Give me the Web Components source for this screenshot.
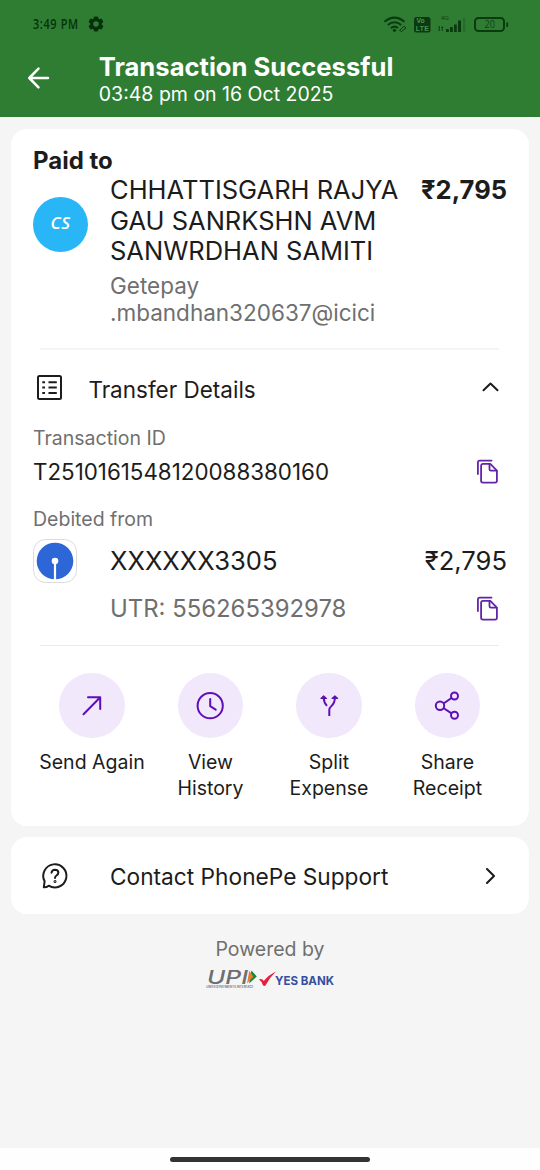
<!DOCTYPE html>
<html lang="en">
<head>
<meta charset="utf-8">
<title>Transaction Successful</title>
<style>
  html, body { margin: 0; padding: 0; }
  body { background: #f5f5f5; color: #1c1c1c; font-family: Inter, "Noto Sans", sans-serif; }
</style>
</head>
<body>
<phone-screen>
  <status-bar slot="header"></status-bar>
  <app-header slot="header">Transaction Successful<span slot="sub">03:48 pm on 16 Oct 2025</span></app-header>

  <ui-card>
    <payee-block initials="CS" amount="₹2,795">
      <span>CHHATTISGARH RAJYA<br>GAU SANRKSHN AVM<br>SANWRDHAN SAMITI</span>
      <span slot="handle">Getepay<br>.mbandhan320637@icici</span>
    </payee-block>
    <ui-divider style="--h:2px"></ui-divider>
    <transfer-details></transfer-details>
    <ui-divider style="--c:#ebebeb"></ui-divider>
    <action-bar>
      <action-item icon="send">Send Again</action-item>
      <action-item icon="clock">View<br>History</action-item>
      <action-item icon="split">Split<br>Expense</action-item>
      <action-item icon="share">Share<br>Receipt</action-item>
    </action-bar>
  </ui-card>

  <ui-card style="height:77px">
    <support-row>Contact PhonePe Support</support-row>
  </ui-card>

  <powered-by>Powered by</powered-by>
  <nav-handle slot="footer"></nav-handle>
</phone-screen>

<script>
const ICONS = {
  send: `<svg width="36" height="36" viewBox="0 0 36 36" fill="none" stroke="#5f10b4" stroke-width="2" stroke-linecap="round" stroke-linejoin="round"><path d="M9.500 26.300L26 9.500M14 9.200H26.200V21"/></svg>`,
  clock: `<svg width="36" height="36" viewBox="0 0 36 36" fill="none" stroke="#5f10b4" stroke-width="2" stroke-linecap="round" stroke-linejoin="round"><circle cx="18.200" cy="17.700" r="12.600"/><path d="M18.200 11V18.200L23.700 21.700"/></svg>`,
  split: `<svg width="36" height="36" viewBox="0 0 36 36" fill="none" stroke="#5f10b4" stroke-width="2" stroke-linecap="butt" stroke-linejoin="round"><path d="M18.300 28V21.800C18.300 17.500 23.900 18.500 23.900 9.500M12.600 9.500C12.800 13.500 13.600 15.500 16 17.900"/><path d="M10 10.500L12.600 7.900L15.400 10.500ZM21.100 10.500L23.900 7.900L26.600 10.500Z" fill="#5f10b4" stroke-width="1.200"/></svg>`,
  share: `<svg width="36" height="36" viewBox="0 0 36 36" fill="none" stroke="#5f10b4" stroke-width="2"><circle cx="11" cy="17.700" r="4.200"/><circle cx="25.500" cy="8" r="3.500"/><circle cx="25.500" cy="27.200" r="3.500"/><path d="M14.500 15.500L22.500 10M14.400 20L22.500 25.300"/></svg>`,
  copy: `<svg width="24" height="26" viewBox="0 0 24 26" fill="none" stroke="#6224a8" stroke-width="1.800" stroke-linecap="round" stroke-linejoin="round"><path d="M1.900 15V3.500Q1.900 1.600 3.800 1.600H15.500"/><path d="M7 4.900H14.300L20.900 11.600V21.800Q20.900 23.600 19.100 23.600H7Q5.100 23.600 5.100 21.800V6.800Q5.100 4.900 7 4.900Z"/><path d="M13.500 5.200V10.200Q13.500 11.700 15 11.700H20.500"/></svg>`,
};

function element(name, css, html) {
  customElements.define(name, class extends HTMLElement {
    connectedCallback() {
      if (this.shadowRoot) return;
      const root = this.attachShadow({ mode: 'open' });
      root.innerHTML = `<style>:host,*{box-sizing:border-box}svg{display:block;flex:none;overflow:visible}${css}</style>` +
        (typeof html === 'function' ? html(this) : html);
    }
  });
}

element('phone-screen', `
  :host { display: flex; flex-direction: column; width: 540px; height: 1170px; overflow: hidden; background: #f5f5f5; }
  header { height: 117px; background: #2e7d32; flex: none; }
  main { flex: 1; display: flex; flex-direction: column; gap: 11px; padding: 12px 11px 0; }`,
  `<header><slot name="header"></slot></header><main><slot></slot></main><slot name="footer"></slot>`);

element('status-bar', `
  :host { display: flex; justify-content: space-between; align-items: center; height: 48px; padding: 0 31px 0 33px; color: #07310b; }
  div { display: flex; align-items: center; }
  .time { display: inline-block; width: 54.500px; font: 600 14px/20px "Open Sans", sans-serif; white-space: nowrap; }
  .time span { display: inline-block; transform: scaleX(.78); transform-origin: 0 50%; letter-spacing: .8px; }`,
  `<div><span class="time"><span>3:49 PM</span></span>
    <svg width="16" height="16" viewBox="0 0 16 16"><g fill="#07310b"><rect x="5.800" y=".4" width="4.400" height="15.200" rx="1"/><rect x="5.800" y=".4" width="4.400" height="15.200" rx="1" transform="rotate(60 8 8)"/><rect x="5.800" y=".4" width="4.400" height="15.200" rx="1" transform="rotate(120 8 8)"/><circle cx="8" cy="8" r="6"/></g><circle cx="8" cy="8" r="2.800" fill="#2e7d32"/></svg></div>
   <svg width="126" height="22" viewBox="383 13 126 22" fill="none" stroke="#0b3a10">
     <g stroke-width="2"><path d="M384.500 21.800Q394.500 13.500 404.500 21.800"/><path d="M387.800 25Q394.500 19.600 401.200 25"/><path d="M390.800 28.200Q394.500 25.200 398 28"/></g>
     <circle cx="394.500" cy="30.300" r="1.600" fill="#0b3a10" stroke="none"/>
     <path d="M399.500 30.500L404 26.200L406 28L401.500 31.500Z" stroke-width="1"/>
     <rect x="414" y="17" width="16.500" height="15.500" rx="2.500" fill="#0b3a10" stroke="none"/>
     <g stroke="none" font-family="Liberation Sans, sans-serif" font-weight="700" fill="#4a9550"><text x="416.500" y="23.400" font-size="6.800">Vo</text><text x="415.800" y="31.400" font-size="6.800" textLength="13">LTE</text>
     <text x="441" y="20" font-size="6" fill="#0f3f14" font-weight="400">4G</text></g>
     <g fill="#0b3a10" stroke="none"><rect x="438.700" y="26" width="1" height="5"/><path d="M441 28L442.200 26L443.400 28H442.700V31H441.800V28Z"/><rect x="446" y="29" width="2.800" height="3"/><rect x="450" y="27" width="2.800" height="5"/><rect x="454" y="24.500" width="2.800" height="7.500"/><rect x="458" y="20.500" width="3" height="11.500"/></g>
     <rect x="463" y="18" width="2.300" height="14" fill="#266d2b" stroke="none"/>
     <rect x="475" y="18" width="29" height="13" rx="3.500" stroke-width="2"/><path d="M507.200 22.500V27" stroke-width="1.800"/>
     <text x="484.500" y="28.300" font-size="10" font-family="Open Sans, sans-serif" fill="#0f4415" stroke="none" textLength="10.500" lengthAdjust="spacingAndGlyphs">20</text>
   </svg>`);

element('app-header', `
  :host { display: flex; padding: 4.800px 0 0 27px; color: #fff; }
  svg { margin: 13.500px 47.800px 0 0; }
  h1 { margin: 0; font: 700 25.600px/28px Inter; }
  p { margin: 0; font: 400 19.500px/26px Inter; margin-top: .4px; }`,
  `<svg width="24" height="24" viewBox="0 0 24 24" fill="none" stroke="#fff" stroke-width="2.500" stroke-linecap="round" stroke-linejoin="round"><path d="M21 12H2.500M11.500 2.700L2.300 12L11.500 21.300"/></svg>
   <div><h1><slot></slot></h1><p><slot name="sub"></slot></p></div>`);

element('ui-card', `:host { display: block; background: #fff; border-radius: 16px; padding: 0 22px; }
  :host(:first-of-type) { height: 697px; }`, `<slot></slot>`);

element('payee-block', `
  :host { display: block; padding-top: 20px; }
  h2 { margin: 0 0 2.400px; font: 700 24px/24px Inter; }
  .row { display: grid; grid-template-columns: 55px 1fr auto; column-gap: 22px; height: 172.600px; }
  .avatar { margin-top: 21.600px; width: 55px; height: 55px; border-radius: 50%; background: #29b6f6; color: #fff; display: flex; align-items: center; justify-content: center; font: italic 600 17px/1 "Open Sans", sans-serif; padding-bottom: 3px; letter-spacing: .5px; }
  .name { font-size: 25.500px; line-height: 30.400px; white-space: nowrap; }
  .handle { margin-top: 5.300px; font-size: 22.500px; line-height: 27.300px; color: #6f6f6f; white-space: nowrap; }
  .amt { font: 700 25.500px/30.400px Inter; }`,
  h => `<h2>Paid to</h2><div class="row"><div class="avatar">${h.getAttribute('initials')}</div>
   <div><div class="name"><slot></slot></div><div class="handle"><slot name="handle"></slot></div></div>
   <div class="amt">${h.getAttribute('amount')}</div></div>`);

element('ui-divider', `:host { display: block; height: var(--h, 1px); margin: 0 8px 0 7px; background: var(--c, #f5f5f5); }`, ``);

element('copy-button', `:host { display: block; margin: 1px 7px 0 0; }`, ICONS.copy);

element('transfer-details', `
  :host { display: block; height: 295px; padding-top: 25px; }
  div { display: flex; justify-content: space-between; align-items: center; }
  .head { height: 30px; font-size: 22.500px; justify-content: flex-start; padding-left: 3px; }
  .head svg { position: relative; top: -2.500px; }
  .head b { font-weight: 400; margin: 0 auto 0 25.400px; }
  .label { height: 24px; font-size: 19.500px; color: #6f6f6f; }
  .id { height: 30px; margin-top: 6.500px; font-size: 22.350px; }
  .acct { height: 44px; margin-top: 8px; font-size: 25.600px; justify-content: flex-start; gap: 33px; }
  .acct i { font-style: normal; margin-left: auto; }
  .utr { height: 30px; margin-top: 10.500px; padding-left: 77px; font-size: 23.900px; color: #6f6f6f; }`,
  `<div class="head">
     <svg width="27" height="27" viewBox="0 0 27 27" fill="none" stroke="#1c1c1c" stroke-width="2"><rect x="2" y="2" width="23" height="23" rx="1.500"/><path d="M6.300 8.200H9M12.500 8.200H20.800M6.300 13.500H9M12.500 13.500H20.800M6.300 19H9M12.500 19H20.800"/></svg>
     <b>Transfer Details</b>
     <svg width="18" height="12" viewBox="0 0 18 12" style="margin-right:8px" fill="none" stroke="#1c1c1c" stroke-width="2" stroke-linecap="round" stroke-linejoin="round"><path d="M2.500 9.300L9.500 2.500L16.500 9.300"/></svg>
   </div>
   <div class="label" style="margin-top:21px">Transaction ID</div>
   <div class="id"><span>T2510161548120088380160</span><copy-button></copy-button></div>
   <div class="label" style="margin-top:20.500px">Debited from</div>
   <div class="acct">
     <svg width="44" height="44" viewBox="0 0 44 44"><rect x=".5" y=".5" width="43" height="43" rx="12" fill="#fff" stroke="#dcdcdc"/><circle cx="22" cy="22" r="18.300" fill="#2d66d6"/><circle cx="22" cy="22" r="3.300" fill="#fff"/><rect x="20.900" y="22" width="2.200" height="19" fill="#fff"/></svg>
     <span>XXXXXX3305</span><i>₹2,795</i></div>
   <div class="utr"><span>UTR: 556265392978</span><copy-button></copy-button></div>`);

element('action-bar', `:host { display: grid; grid-template-columns: repeat(4, 118.500px); margin-left: -.3px; padding-top: 26.800px; }`, `<slot></slot>`);

element('action-item', `
  :host { display: flex; flex-direction: column; align-items: center; text-align: center; font-size: 19.500px; line-height: 26px; white-space: nowrap; }
  .disc { width: 65.600px; height: 65.600px; border-radius: 50%; background: #f1e8fc; display: flex; align-items: center; justify-content: center; margin-bottom: 10.400px; }`,
  h => `<div class="disc">${ICONS[h.getAttribute('icon')]}</div><span><slot></slot></span>`);

element('support-row', `
  :host { display: flex; align-items: center; height: 78px; padding: 0 9px 0 7px; font-size: 22.700px; }
  span { margin: 0 auto 0 40px; }`,
  `<svg width="30" height="30" viewBox="0 0 30 30" fill="none" stroke="#1c1c1c" stroke-width="2" stroke-linejoin="round" stroke-linecap="round"><path d="M3.800 26.300L4.600 20.300A11.600 11.600 0 1 1 8.700 24.700Q6.500 26.500 3.800 26.300Z"/><path d="M11.500 11.700Q12 8.700 15 8.700Q18.300 8.900 18.400 11.600Q18.400 13.300 16.500 14.500Q15 15.500 15 17"/><circle cx="15" cy="20.500" r=".5"/></svg>
   <span><slot></slot></span>
   <svg width="14" height="20" viewBox="0 0 14 20" fill="none" stroke="#1c1c1c" stroke-width="2.100" stroke-linecap="round" stroke-linejoin="round"><path d="M3 3L10 10L3 17"/></svg>`);

element('powered-by', `
  :host { display: flex; flex-direction: column; align-items: center; padding-top: 11px; font-size: 19.500px; line-height: 26px; color: #6f6f6f; }
  svg { margin-top: 6px; }`,
  `<slot></slot>
   <svg width="130" height="22" viewBox="205 968 130 22">
     <text x="207" y="983.500" font-family="Inter, sans-serif" font-style="italic" font-weight="500" font-size="18.500" fill="#6d6e71" textLength="41" lengthAdjust="spacingAndGlyphs">UPI</text>
     <path d="M251.500 970.500L256.800 976.500L249 983.500Z" fill="#17863f"/><path d="M249.300 970.500L253.300 976.700L247 983.500Z" fill="#ee7d2b"/>
     <text x="206.300" y="988.300" font-family="Inter, sans-serif" font-size="3.200" font-weight="600" font-style="italic" fill="#6d6e71" textLength="47" lengthAdjust="spacingAndGlyphs">UNIFIED PAYMENTS INTERFACE</text>
     <path d="M259 979.500Q262 978 263.800 981Q268.500 975 276 971.500Q269.500 977.500 265.500 985.500Q264 986.500 262.800 985Q261.500 981 259 979.500Z" fill="#e2203f"/>
     <text x="275" y="984.800" font-family="Inter, sans-serif" font-size="11.800" font-weight="700" fill="#36509f" textLength="59" lengthAdjust="spacingAndGlyphs">YES BANK</text>
   </svg>`);

element('nav-handle', `
  :host { display: flex; justify-content: center; align-items: center; height: 22px; background: #fefefe; flex: none; }
  i { width: 200px; height: 5px; border-radius: 3px; background: #333; }`, `<i></i>`);
</script>
</body>
</html>
